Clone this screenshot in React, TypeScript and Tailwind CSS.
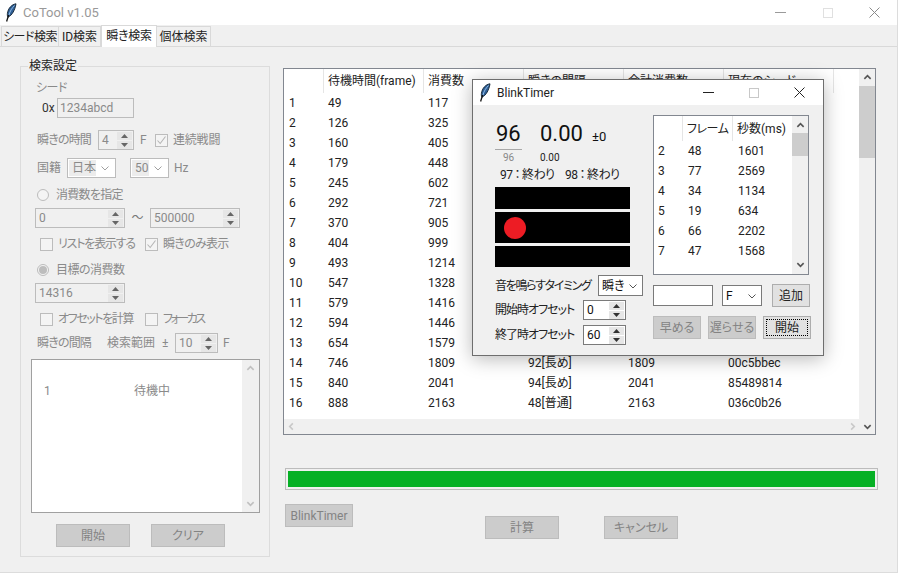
import React from "react"

const mainRows = [
  ["1", "49", "117"], ["2", "126", "325"], ["3", "160", "405"], ["4", "179", "448"],
  ["5", "245", "602"], ["6", "292", "721"], ["7", "370", "905"], ["8", "404", "999"],
  ["9", "493", "1214"], ["10", "547", "1328"], ["11", "579", "1416"], ["12", "594", "1446"],
  ["13", "654", "1579"],
  ["14", "746", "1809", "92[長め]", "1809", "00c5bbec"],
  ["15", "840", "2041", "94[長め]", "2041", "85489814"],
  ["16", "888", "2163", "48[普通]", "2163", "036c0b26"],
]

const timerRows = [
  ["2", "48", "1601"], ["3", "77", "2569"], ["4", "34", "1134"],
  ["5", "19", "634"], ["6", "66", "2202"], ["7", "47", "1568"],
]

function Feather() {
  return (
    <svg width="12" height="19" viewBox="0 0 12 19" className="shrink-0">
      <path d="M11 0.8 C6.5 1.5 3 5.5 2.4 10.5 C2.2 12.2 2.5 13.5 3 14.2 C7 12.5 10 7 11 0.8 Z" fill="#2f5f96" stroke="#10202f" strokeWidth="0.9" />
      <path d="M9.5 2.5 C7 5 5 8 4 12" stroke="#9cc6ee" strokeWidth="0.9" fill="none" />
      <path d="M3.6 12 L1.6 18.5" stroke="#111" strokeWidth="1.3" fill="none" />
    </svg>
  )
}

function Chevron({ dir, color = "#606060", size = 9, width = 1.8 }: { dir: "up" | "down" | "left" | "right"; color?: string; size?: number; width?: number }) {
  const d = {
    up: "M1.5 6.5 L5 3 L8.5 6.5",
    down: "M1.5 3.5 L5 7 L8.5 3.5",
    left: "M6.5 1.5 L3 5 L6.5 8.5",
    right: "M3.5 1.5 L7 5 L3.5 8.5",
  }[dir]
  return (
    <svg width={size} height={size} viewBox="0 0 10 10" className="shrink-0">
      <path d={d} stroke={color} strokeWidth={width} fill="none" />
    </svg>
  )
}

function Spin({ value, w, enabled = false }: { value: string; w: string; enabled?: boolean }) {
  const arrow = enabled ? "#333" : "#666"
  return (
    <div className={`flex h-[20px] items-center border ${w} ${enabled ? "border-[#7a7a7a] bg-white text-[#111]" : "border-[#bcbcbc] bg-[#f0f0f0] text-[#8a8a8a]"}`}>
      <span className="flex-1 pl-[3px]">{value}</span>
      <div className="mr-[1px] flex w-[15px] flex-col gap-[1px]">
        <div className="flex h-[8px] items-center justify-center bg-[#e6e6e6]">
          <svg width="7" height="4" viewBox="0 0 7 4"><path d="M3.5 0 L7 4 L0 4 Z" fill={arrow} /></svg>
        </div>
        <div className="flex h-[8px] items-center justify-center bg-[#e6e6e6]">
          <svg width="7" height="4" viewBox="0 0 7 4"><path d="M0 0 L7 0 L3.5 4 Z" fill={arrow} /></svg>
        </div>
      </div>
    </div>
  )
}

function DisabledCombo({ value, w }: { value: string; w: string }) {
  return (
    <div className={`flex h-[20px] items-center border border-[#bcbcbc] bg-white p-[1px] text-[#8a8a8a] ${w}`}>
      <span className="flex h-full flex-1 items-center bg-[#ececec] pl-[3px]">{value}</span>
      <span className="flex w-[18px] justify-center"><Chevron dir="down" color="#a0a0a0" size={10} width={1} /></span>
    </div>
  )
}

function Combo({ value, w }: { value: string; w: string }) {
  return (
    <div className={`flex h-[21px] items-center border border-[#7a7a7a] bg-white text-[#111] ${w}`}>
      <span className="flex-1 pl-[3px]">{value}</span>
      <span className="flex w-[18px] justify-center"><Chevron dir="down" color="#555" size={10} width={1} /></span>
    </div>
  )
}

function Check({ label, checked = false, w, tight = "" }: { label: string; checked?: boolean; w: string; tight?: string }) {
  return (
    <div className={`flex items-center gap-[5px] ${w}`}>
      <span className="flex h-[13px] w-[13px] items-center justify-center border border-[#bcbcbc] bg-[#f4f4f4]">
        {checked && (
          <svg width="11" height="11" viewBox="0 0 11 11"><path d="M1.5 5.5 L4.2 8.5 L9.5 1.5" stroke="#b5b5b5" strokeWidth="1.1" fill="none" /></svg>
        )}
      </span>
      <span className={tight}>{label}</span>
    </div>
  )
}

function Radio({ label, checked = false, tight = "" }: { label: string; checked?: boolean; tight?: string }) {
  return (
    <div className="flex items-center gap-[7px] pl-[2px]">
      <span className="flex h-[12px] w-[12px] items-center justify-center rounded-full border border-[#bcbcbc] bg-[#f4f4f4]">
        {checked && <span className="h-[8px] w-[8px] rounded-full bg-[#bdbdbd]" />}
      </span>
      <span className={tight}>{label}</span>
    </div>
  )
}

function GrayButton({ label, w }: { label: string; w: string }) {
  return (
    <div className={`flex h-[23px] items-center justify-center border border-[#bcbcbc] bg-[#cccccc] text-[#838383] ${w}`}>{label}</div>
  )
}

function SearchSettings() {
  return (
    <div className="relative ml-[20px] mt-[19px] h-[491px] w-[250px] shrink-0 border border-[#dcdcdc] text-[#8a8a8a]">
      <span className="absolute left-[7px] top-[-9px] bg-[#f0f0f0] px-[1px] leading-[17px] text-[#222]">検索設定</span>

      <div className="ml-[15px] mt-[12px] flex h-[18px] items-center tracking-[-0.5px]">シード</div>
      <div className="ml-[21px] mt-[1px] flex h-[20px] items-center">
        <span className="w-[15px] text-[#333]">0x</span>
        <div className="flex h-[20px] w-[77px] items-center border border-[#bcbcbc] bg-[#f0f0f0] pl-[2px]">1234abcd</div>
      </div>
      <div className="ml-[16px] mt-[12px] flex h-[20px] items-center">
        <span className="w-[61px] tracking-[-0.8px]">瞬きの時間</span>
        <Spin value="4" w="w-[36px]" />
        <span className="ml-[6px] w-[15px]">F</span>
        <Check label="連続戦闘" checked w="w-auto" tight="tracking-[-0.2px]" />
      </div>
      <div className="ml-[16px] mt-[8px] flex h-[20px] items-center">
        <span className="w-[30px]">国籍</span>
        <DisabledCombo value="日本" w="w-[49px]" />
        <DisabledCombo value="50" w="ml-[14px] w-[39px]" />
        <span className="ml-[5px]">Hz</span>
      </div>
      <div className="ml-[14px] mt-[8px] flex h-[18px] items-center">
        <Radio label="消費数を指定" tight="tracking-[-0.7px]" />
      </div>
      <div className="ml-[14px] mt-[4px] flex h-[20px] items-center">
        <Spin value="0" w="w-[90px]" />
        <span className="w-[25px] text-center text-[#777]">～</span>
        <Spin value="500000" w="w-[90px]" />
      </div>
      <div className="ml-[19px] mt-[7px] flex h-[18px] items-center">
        <Check label="リストを表示する" w="w-[105px]" tight="tracking-[-1.2px]" />
        <Check label="瞬きのみ表示" checked w="w-auto" tight="tracking-[-0.7px]" />
      </div>
      <div className="ml-[14px] mt-[8px] flex h-[18px] items-center">
        <Radio label="目標の消費数" checked tight="tracking-[-0.5px]" />
      </div>
      <div className="ml-[14px] mt-[4px] flex h-[20px] items-center">
        <Spin value="14316" w="w-[90px]" />
      </div>
      <div className="ml-[19px] mt-[7px] flex h-[18px] items-center">
        <Check label="オフセットを計算" w="w-[105px]" tight="tracking-[-1.4px]" />
        <Check label="フォーカス" w="w-auto" tight="tracking-[-2.5px]" />
      </div>
      <div className="ml-[16px] mt-[5px] flex h-[20px] items-center">
        <span className="w-[70px] tracking-[-0.8px]">瞬きの間隔</span>
        <span className="w-[55px]">検索範囲</span>
        <span className="w-[13px]">±</span>
        <Spin value="10" w="w-[43px]" />
        <span className="ml-[5px]">F</span>
      </div>
      <div className="ml-[10px] mt-[6px] flex h-[154px] w-[229px] border border-[#a0a0a0]">
        <div className="flex-1 bg-white">
          <div className="mt-[21px] flex h-[20px] items-center pl-[12px]">
            <span className="w-[90px]">1</span>
            <span>待機中</span>
          </div>
        </div>
        <div className="flex w-[17px] flex-col items-center justify-between py-[4px]">
          <Chevron dir="up" color="#c0c0c0" />
          <Chevron dir="down" color="#c0c0c0" />
        </div>
      </div>
      <div className="ml-[35px] mt-[11px] flex gap-[21px]">
        <GrayButton label="開始" w="w-[74px]" />
        <GrayButton label="クリア" w="w-[74px]" />
      </div>
    </div>
  )
}

function ResultTable() {
  return (
    <div className="flex h-[367px] w-[593px] border border-[#828790] bg-[#f0f0f0] text-[#222]">
      <div className="flex min-w-0 flex-1 flex-col">
        <div className="flex-1 bg-white">
          <div className="flex h-[24px] items-center">
            <span className="h-full w-[40px] border-r border-[#e5e5e5]" />
            {["待機時間(frame)", "消費数", "瞬きの間隔", "合計消費数", "現在のシード"].map((h, i) => (
              <span key={h} className={`flex h-full items-center border-r border-[#e5e5e5] pl-[4px] ${i === 4 ? "w-[110px]" : "w-[100px]"}`}>{h}</span>
            ))}
          </div>
          {mainRows.map(row => (
            <div key={row[0]} className="flex h-[20px] items-center">
              <span className="w-[40px] pl-[5px]">{row[0]}</span>
              {row.slice(1).map((c, i) => (
                <span key={i} className="w-[100px] pl-[4px]">{c}</span>
              ))}
            </div>
          ))}
        </div>
        <div className="flex h-[15px] items-center justify-between pl-[3px] pr-[2px]">
          <Chevron dir="left" color="#c8c8c8" />
          <Chevron dir="right" color="#c8c8c8" />
        </div>
      </div>
      <div className="flex w-[16px] flex-col items-center pb-[3px] pt-[4px]">
        <Chevron dir="up" color="#555" />
        <div className="mt-[4px] h-[72px] w-full bg-[#cdcdcd]" />
        <div className="flex-1" />
        <Chevron dir="down" color="#555" />
      </div>
    </div>
  )
}

function BlinkTimerWindow() {
  return (
    <div className="absolute left-[472px] top-[79px] flex h-[277px] w-[352px] flex-col border border-[#6e6e6e] bg-[#f0f0f0] text-[#222] shadow-[0_3px_18px_rgba(0,0,0,0.28)]">
      <div className="flex h-[25px] shrink-0 items-center bg-white pl-[6px]">
        <Feather />
        <span className="ml-[6px] text-[#222]">BlinkTimer</span>
        <div className="flex-1" />
        <span className="h-[1px] w-[11px] bg-[#222]" />
        <span className="ml-[35px] h-[10px] w-[10px] border border-[#c8c8c8]" />
        <svg width="11" height="11" viewBox="0 0 11 11" className="ml-[35px] mr-[18px]"><path d="M0.5 0.5 L10.5 10.5 M10.5 0.5 L0.5 10.5" stroke="#222" strokeWidth="1" fill="none" /></svg>
      </div>
      <div className="flex flex-1">
        <div className="ml-[22px] w-[150px] shrink-0">
          <div className="mt-[15px] flex h-[28px] items-center text-[#111]">
            <span className="w-[45px] pl-[1px] text-[22px] leading-none">96</span>
            <span className="w-[52px] text-[22px] leading-none">0.00</span>
            <span className="mt-[5px] text-[13px]">±0</span>
          </div>
          <div className="mt-[1px] h-[1px] w-[27px] bg-[#a8a8a8]" />
          <div className="mt-[1px] flex h-[12px] items-center text-[10px]">
            <span className="w-[45px] pl-[8px] text-[#888]">96</span>
            <span>0.00</span>
          </div>
          <div className="ml-[5px] mt-[4px] flex h-[16px] items-center tracking-[-0.5px]">
            <span className="w-[65px]">97<span className="mx-[2px]">：</span>終わり</span>
            <span>98<span className="mx-[2px]">：</span>終わり</span>
          </div>
          <div className="mt-[4px] flex w-[135px] flex-col gap-[3px]">
            <div className="h-[22px] bg-black" />
            <div className="flex h-[31px] items-center bg-black pl-[9px]">
              <span className="h-[22px] w-[22px] rounded-full bg-[#ed1c24]" />
            </div>
            <div className="h-[21px] bg-black" />
          </div>
          <div className="mt-[8px] flex h-[21px] items-center">
            <span className="w-[103px] tracking-[-1.3px]">音を鳴らすタイミング</span>
            <Combo value="瞬き" w="w-[45px]" />
          </div>
          <div className="mt-[4px] flex h-[20px] items-center">
            <span className="w-[88px] tracking-[-1px]">開始時オフセット</span>
            <Spin value="0" w="w-[43px]" enabled />
          </div>
          <div className="mt-[5px] flex h-[20px] items-center">
            <span className="w-[88px] tracking-[-1px]">終了時オフセット</span>
            <Spin value="60" w="w-[43px]" enabled />
          </div>
        </div>
        <div className="ml-[8px] w-[158px] shrink-0">
          <div className="mt-[10px] flex h-[160px] w-[156px] border border-[#828790] bg-white">
            <div className="flex-1">
              <div className="flex h-[25px] items-center">
                <span className="h-full w-[29px] border-r border-[#e5e5e5]" />
                <span className="flex h-full w-[50px] items-center border-r border-[#e5e5e5] pl-[4px] tracking-[-0.5px]">フレーム</span>
                <span className="pl-[4px]">秒数(ms)</span>
              </div>
              {timerRows.map(r => (
                <div key={r[0]} className="flex h-[20px] items-center">
                  <span className="w-[29px] pl-[4px]">{r[0]}</span>
                  <span className="w-[50px] pl-[5px]">{r[1]}</span>
                  <span className="pl-[5px]">{r[2]}</span>
                </div>
              ))}
            </div>
            <div className="flex w-[16px] flex-col items-center bg-[#f0f0f0] py-[5px]">
              <Chevron dir="up" color="#555" />
              <div className="mt-[3px] h-[23px] w-full bg-[#cdcdcd]" />
              <div className="flex-1" />
              <Chevron dir="down" color="#555" />
            </div>
          </div>
          <div className="mt-[9px] flex h-[23px] items-center">
            <div className="h-[21px] w-[60px] border border-[#7a7a7a] bg-white" />
            <Combo value="F" w="ml-[9px] w-[40px]" />
            <div className="ml-[10px] flex h-[23px] w-[38px] items-center justify-center border border-[#adadad] bg-[#e1e1e1]">追加</div>
          </div>
          <div className="mt-[9px] flex h-[23px] items-center gap-[7px]">
            <GrayButton label="早める" w="w-[48px]" />
            <GrayButton label="遅らせる" w="w-[48px]" />
            <div className="flex h-[23px] w-[48px] items-center justify-center border border-[#adadad] bg-[#e1e1e1] p-[2px]">
              <span className="flex h-full w-full items-center justify-center border border-dotted border-black">開始</span>
            </div>
          </div>
        </div>
      </div>
    </div>
  )
}

export default function App() {
  return (
    <div className="relative h-[574px] w-[899px] overflow-hidden whitespace-nowrap bg-white font-['Roboto','Noto_Sans_CJK_JP',sans-serif] text-[12px] [font-feature-settings:'palt']">
      <div className="h-[573px] w-[898px] border-b border-r border-[#dcdcdc] bg-[#f0f0f0]">
        {/* タイトルバー */}
        <div className="flex h-[25px] items-center bg-white pl-[5px] pr-[17px]">
          <Feather />
          <span className="ml-[6px] text-[13px] text-[#999]">CoTool v1.05</span>
          <div className="flex-1" />
          <span className="h-[1px] w-[11px] bg-[#9a9a9a]" />
          <span className="ml-[37px] h-[10px] w-[10px] border border-[#e0e0e0]" />
          <svg width="11" height="11" viewBox="0 0 11 11" className="ml-[36px]"><path d="M0.5 0.5 L10.5 10.5 M10.5 0.5 L0.5 10.5" stroke="#8a8a8a" strokeWidth="1" fill="none" /></svg>
        </div>

        {/* タブ */}
        <div className="flex h-[22px] items-end border-b border-[#d9d9d9] pl-[1px] text-[#222]">
          <span className="flex h-[20px] w-[58px] items-center justify-center border-x border-t border-[#d9d9d9] tracking-[-0.5px]">シード検索</span>
          <span className="flex h-[20px] w-[42px] items-center justify-center border-r border-t border-[#d9d9d9]">ID検索</span>
          <span className="mb-[-1px] flex h-[22px] w-[56px] items-center justify-center border-x border-t border-[#d9d9d9] bg-white pb-[2px] tracking-[-0.3px]">瞬き検索</span>
          <span className="flex h-[20px] w-[54px] items-center justify-center border-r border-t border-[#d9d9d9]">個体検索</span>
        </div>

        <div className="flex">
          <SearchSettings />
          <div className="ml-[13px] flex flex-col">
            <div className="mt-[21px]">
              <ResultTable />
            </div>
            <div className="ml-[2px] mt-[33px] flex h-[22px] w-[593px] items-center border border-[#bcbcbc] p-[2px]">
              <div className="h-full w-full bg-[#06b025]" />
            </div>
            <div className="ml-[2px] mt-[14px] flex items-start">
              <GrayButton label="BlinkTimer" w="w-[68px]" />
              <div className="ml-[132px] mt-[12px] flex gap-[45px]">
                <GrayButton label="計算" w="w-[74px]" />
                <GrayButton label="キャンセル" w="w-[74px]" />
              </div>
            </div>
          </div>
        </div>
      </div>
      <BlinkTimerWindow />
    </div>
  )
}
